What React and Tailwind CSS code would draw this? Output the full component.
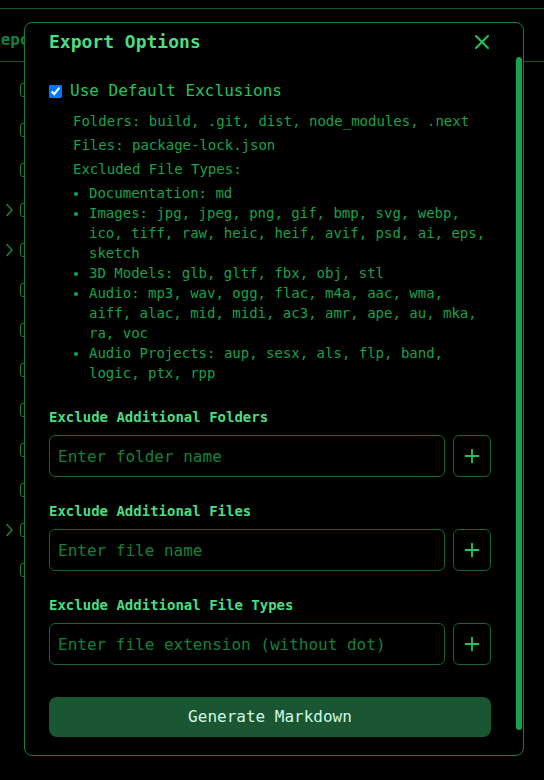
import { X, Plus } from "lucide-react";

const mono = { fontFamily: '"DejaVu Sans Mono", "Liberation Mono", monospace' };

const bgRows = [false, false, false, true, true, false, false, false, false, false, false, true, false];

const excludedTypes = [
  ["Documentation", "md"],
  ["Images", "jpg, jpeg, png, gif, bmp, svg, webp, ico, tiff, raw, heic, heif, avif, psd, ai, eps, sketch"],
  ["3D Models", "glb, gltf, fbx, obj, stl"],
  ["Audio", "mp3, wav, ogg, flac, m4a, aac, wma, aiff, alac, mid, midi, ac3, amr, ape, au, mka, ra, voc"],
  ["Audio Projects", "aup, sesx, als, flp, band, logic, ptx, rpp"],
];

const ExcludeField = ({ label, placeholder }) => (
  <div>
    <h4 className="text-sm font-bold leading-5 text-[#4ade80] mb-2">{label}</h4>
    <div className="flex gap-2">
      <input
        type="text"
        placeholder={placeholder}
        className="flex-1 min-w-0 h-[42px] px-2 bg-black border border-[#166534] rounded-md text-base text-[#22c55e] placeholder:text-[#15803d] outline-none"
        style={mono}
      />
      <button className="w-[38px] h-[42px] flex items-center justify-center border border-[#166534] rounded-md text-[#22c55e]">
        <Plus size={22} strokeWidth={2} />
      </button>
    </div>
  </div>
);

const Background = () => (
  <div className="h-[780px] overflow-hidden bg-black">
    <div className="h-[9px] border-b border-[#14532d]" />
    <div className="h-[53px] border-b border-[#14532d] flex items-center pt-[10px]">
      <span className="-ml-[9px] text-[16px] font-bold text-[#15803d]">Repository</span>
    </div>
    <div className="pt-[8px]">
      {bgRows.map((open, i) => (
        <div key={i} className="flex items-center h-10">
          <span className="w-5 flex items-center">
            {open && (
              <svg width="20" height="14" viewBox="0 0 20 14" fill="none">
                <polyline points="6.5,1 12,7 6.5,13" stroke="#15803d" strokeWidth="1.5" />
              </svg>
            )}
          </span>
          <span className="w-3.5 h-3.5 border border-[#15803d] rounded-[3px]" />
        </div>
      ))}
    </div>
  </div>
);

export default function App() {
  return (
    <div className="relative w-[544px] h-[780px] bg-black overflow-hidden" style={mono}>
      <Background />

      <div className="absolute left-6 top-[22px] w-[500px] h-[734px] bg-black border border-[#15803d] rounded-lg overflow-hidden flex flex-col">
        <div className="flex items-center justify-between pl-6 pr-[29px] pt-[5px] pb-px">
          <h2 className="text-lg leading-7 font-bold text-[#4ade80]">Export Options</h2>
          <button className="text-[#22c55e]">
            <X size={24} strokeWidth={2} />
          </button>
        </div>

        <div className="flex-1 overflow-y-auto pl-6 pr-8 pt-[22px] pb-11">
          <label className="flex items-center gap-2 h-6">
            <input type="checkbox" defaultChecked className="w-[13px] h-[13px]" />
            <span className="text-base text-[#22c55e]">Use Default Exclusions</span>
          </label>

          <div className="ml-6 mt-2 space-y-1 text-sm leading-5 text-[#16a34a]">
            <p>Folders: build, .git, dist, node_modules, .next</p>
            <p>Files: package-lock.json</p>
            <p>Excluded File Types:</p>
            <ul className="list-disc pl-4">
              {excludedTypes.map(([name, exts]) => (
                <li key={name}>
                  {name}: {exts}
                </li>
              ))}
            </ul>
          </div>

          <div className="mt-6 space-y-6">
            <ExcludeField label="Exclude Additional Folders" placeholder="Enter folder name" />
            <ExcludeField label="Exclude Additional Files" placeholder="Enter file name" />
            <ExcludeField label="Exclude Additional File Types" placeholder="Enter file extension (without dot)" />
          </div>

          <button className="mt-8 w-full h-10 rounded-lg bg-[#1a5632] text-base text-[#d1fae5]">
            Generate Markdown
          </button>
        </div>

        {/* scrollbar thumb (headless capture hides the native one) */}
        <div className="absolute right-px top-[34px] w-[6px] h-[673px] rounded-full bg-[#16a34a]" />
      </div>
    </div>
  );
}
